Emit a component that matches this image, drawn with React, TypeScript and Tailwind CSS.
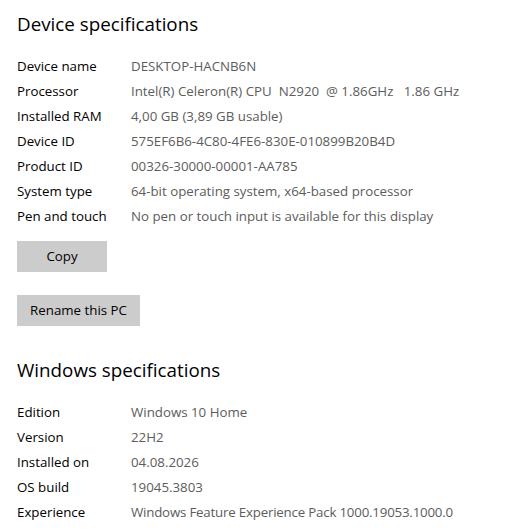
import React from "react";

type Row = [string, string, boolean?];

const device: Row[] = [
  ["Device name", "DESKTOP-HACNB6N"],
  ["Processor", "Intel(R) Celeron(R) CPU  N2920  @ 1.86GHz   1.86 GHz"],
  ["Installed RAM", "4,00 GB (3,89 GB usable)"],
  ["Device ID", "575EF6B6-4C80-4FE6-830E-010899B20B4D"],
  ["Product ID", "00326-30000-00001-AA785"],
  ["System type", "64-bit operating system, x64-based processor"],
  ["Pen and touch", "No pen or touch input is available for this display"],
];

const windows: Row[] = [
  ["Edition", "Windows 10 Home"],
  ["Version", "22H2"],
  ["Installed on", "04.08.2026"],
  ["OS build", "19045.3803"],
  ["Experience", "Windows Feature Experience Pack 1000.19053.1000.0", true],
];

function Rows({ rows }: { rows: Row[] }) {
  return (
    <div className="flex flex-col">
      {rows.map(([k, v, tight]) => (
        <div key={k} className="flex h-[25px] items-center text-[13.3px] leading-[25px]">
          <div className="w-[114px] shrink-0 text-black">{k}</div>
          <div className={tight ? "whitespace-pre tracking-[-0.2px] text-[#5c5c5c]" : "whitespace-pre text-[#5c5c5c]"}>{v}</div>
        </div>
      ))}
    </div>
  );
}

export default function App() {
  return (
    <div className="flex h-[531px] w-[515px] flex-col overflow-hidden bg-white pl-[17px] pt-[10px] font-['Open_Sans',sans-serif] text-black">
      <h1 className="h-[28px] text-[18.8px] leading-[28px] text-black">Device specifications</h1>
      <div className="mt-[16px]">
        <Rows rows={device} />
      </div>
      <button className="mt-[12px] h-[31px] w-[90px] bg-[#cccccc] text-[13.3px] text-black">Copy</button>
      <button className="mt-[23px] h-[31px] w-[123px] bg-[#cccccc] text-[13.3px] text-black">Rename this PC</button>
      <h1 className="mt-[30px] h-[28px] text-[18.8px] leading-[28px] text-black">Windows specifications</h1>
      <div className="mt-[16px]">
        <Rows rows={windows} />
      </div>
    </div>
  );
}
